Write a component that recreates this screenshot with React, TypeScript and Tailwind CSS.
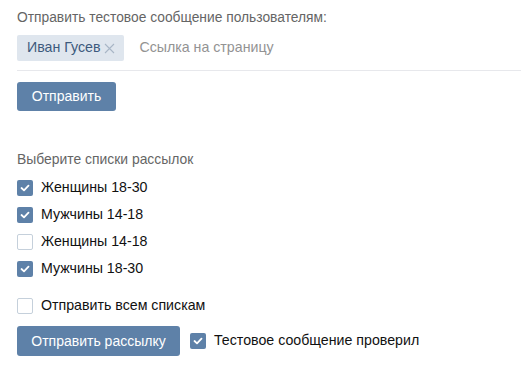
import { useState } from 'react';

function Check({ checked, onChange }: { checked: boolean; onChange: () => void }) {
  return (
    <button
      onClick={onChange}
      className={`w-[16px] h-[16px] rounded-[2px] flex items-center justify-center shrink-0 ${checked ? 'bg-[#5e81a8]' : 'bg-white border border-[#c5d0db]'}`}
    >
      {checked && (
        <svg width="10" height="8" viewBox="0 0 10 8" fill="none">
          <path d="M1.5 4L4 6.3L8.5 1.7" stroke="white" strokeWidth="1.8" strokeLinecap="round" strokeLinejoin="round" />
        </svg>
      )}
    </button>
  );
}

export default function App() {
  const [lists, setLists] = useState([
    { label: 'Женщины 18-30', on: true },
    { label: 'Мужчины 14-18', on: true },
    { label: 'Женщины 14-18', on: false },
    { label: 'Мужчины 18-30', on: true },
  ]);
  const [all, setAll] = useState(false);
  const [tested, setTested] = useState(true);

  const toggle = (i: number) =>
    setLists(lists.map((l, j) => (j === i ? { ...l, on: !l.on } : l)));

  return (
    <div className="min-h-screen bg-white pl-[17px] pt-[8px] text-[14.2px] text-[#111] font-['Helvetica','Liberation_Sans',sans-serif]">
      {/* Test message */}
      <div className="text-[#656565] text-[13.8px] leading-[19px]">Отправить тестовое сообщение пользователям:</div>
      <div className="flex items-center gap-[15px] mt-[8px] h-[26px]">
        <div className="h-[26px] flex items-center gap-[4px] bg-[#dfe6ee] rounded-[2px] pl-[10px] pr-[9px]">
          <span className="text-[#3d5a7d]">Иван Гусев</span>
          <svg width="11" height="11" viewBox="0 0 11 11" className="mt-[1px]">
            <path d="M1 1L10 10M10 1L1 10" stroke="#a8b6c6" strokeWidth="1.1" />
          </svg>
        </div>
        <span className="text-[#939393]">Ссылка на страницу</span>
      </div>
      <div className="mt-[9px] border-t border-[#e7e8ec]" />
      <button className="mt-[11px] h-[29px] w-[99px] rounded-[3px] bg-[#5e81a8] text-white text-[14px]">Отправить</button>

      {/* Lists */}
      <div className="mt-[39px] text-[#656565] text-[13.9px] leading-[19px]">Выберите списки рассылок</div>
      <div className="mt-[11px] flex flex-col gap-[11px]">
        {lists.map((l, i) => (
          <label key={l.label} className="flex items-center gap-[8px] h-[16px] cursor-pointer">
            <Check checked={l.on} onChange={() => toggle(i)} />
            <span>{l.label}</span>
          </label>
        ))}
      </div>
      <label className="mt-[21px] flex items-center gap-[8px] h-[16px] cursor-pointer">
        <Check checked={all} onChange={() => setAll(!all)} />
        <span>Отправить всем спискам</span>
      </label>
      <div className="mt-[12px] flex items-center gap-[10px]">
        <button className="h-[30px] w-[163px] rounded-[3px] bg-[#5e81a8] text-white text-[14px]">Отправить рассылку</button>
        <label className="flex items-center gap-[8px] cursor-pointer">
          <Check checked={tested} onChange={() => setTested(!tested)} />
          <span>Тестовое сообщение проверил</span>
        </label>
      </div>
    </div>
  );
}
